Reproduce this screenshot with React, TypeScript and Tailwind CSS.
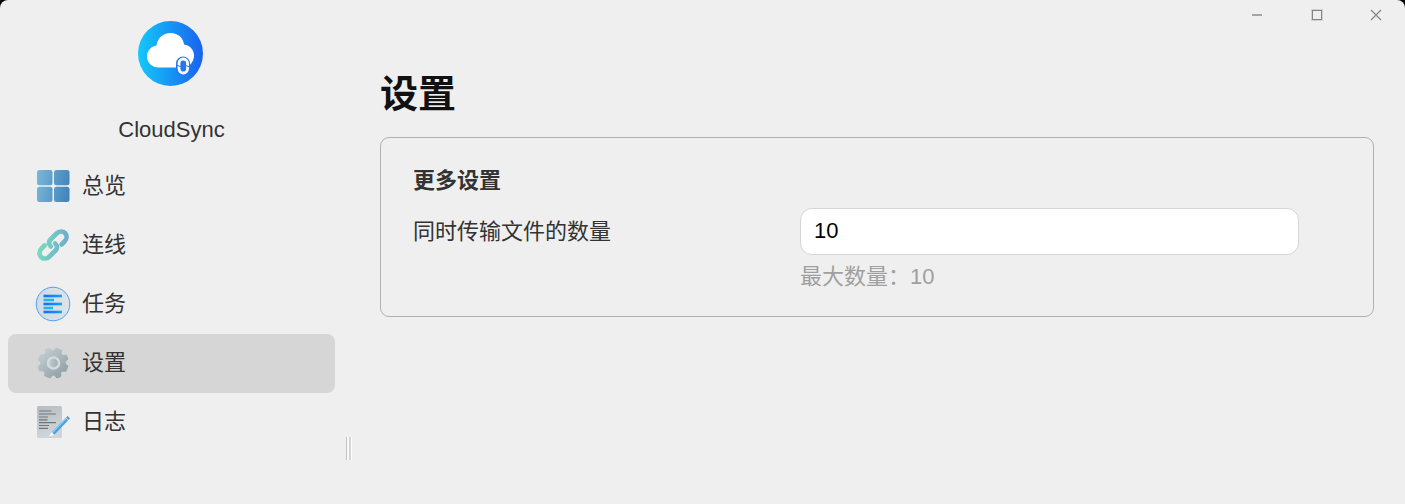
import { useState } from "react";
import type { ReactNode } from "react";

function LogoIcon() {
  return (
    <svg viewBox="0 0 65 65" className="mr-0.5 h-[65px] w-[65px]" aria-hidden="true">
      <defs>
        <linearGradient id="logo" x1="0" x2="1" y1="0.5" y2="0.5">
          <stop offset="0" stopColor="#14c8fb" />
          <stop offset="1" stopColor="#1a62ee" />
        </linearGradient>
      </defs>
      <circle cx="32.5" cy="32.5" r="32.5" fill="url(#logo)" />
      <path
        d="M21 46.500C13.500 46.500 9 41.500 9 35.500C9 29.500 13 25.500 18.500 24.500C19.500 17 25 12 32.500 12C40 12 45.500 17 46 23.500C52 24 56 29 56 34.500C56 41.500 51 46.500 44 46.500Z"
        fill="#fff"
      />
      <rect x="38" y="35.500" width="14" height="19" rx="7" fill="#2477f0" />
      <rect x="41" y="38" width="8.500" height="14" rx="4.200" fill="none" stroke="#fff" strokeWidth="2.800" />
      <path d="M39 44.300l4.500 1.500M47 44.300l4.500 1.500" stroke="#2477f0" strokeWidth="1" />
    </svg>
  );
}

function OverviewIcon() {
  return (
    <svg viewBox="0 0 34 34" className="h-[34px] w-[34px]" aria-hidden="true">
      <defs>
        <linearGradient id="tiles" gradientUnits="userSpaceOnUse" x1="1" y1="14" x2="33" y2="20">
          <stop offset="0" stopColor="#77b4d7" />
          <stop offset="1" stopColor="#4285ba" />
        </linearGradient>
      </defs>
      <g fill="url(#tiles)">
        <rect x="1" y="1" width="15.500" height="15.200" rx="2.500" />
        <rect x="18" y="1" width="15.500" height="15.200" rx="2.500" />
        <rect x="1" y="17.800" width="15.500" height="15.200" rx="2.500" />
        <rect x="18" y="17.800" width="15.500" height="15.200" rx="2.500" />
      </g>
    </svg>
  );
}

function LinkIcon() {
  return (
    <svg viewBox="0 0 34 34" className="h-[34px] w-[34px]" aria-hidden="true">
      <defs>
        <linearGradient id="chain" gradientUnits="userSpaceOnUse" x1="2" y1="14" x2="32" y2="20">
          <stop offset="0" stopColor="#76e0bd" />
          <stop offset="1" stopColor="#70a8cf" />
        </linearGradient>
      </defs>
      <g fill="none" stroke="url(#chain)" strokeWidth="4.600" strokeLinecap="round" strokeLinejoin="round">
        <path d="M14.800 18.500C12.500 16 12.500 13.500 14.500 11.500L20.500 5.500C23 3 26.700 2.700 29 5C31.300 7.300 31 11 28.500 13.500L25.500 16.500" />
        <path d="M19.200 15.500C21.500 18 21.500 20.500 19.500 22.500L13.500 28.500C11 31 7.300 31.300 5 29C2.700 26.700 3 23 5.500 20.500L8.500 17.500" />
      </g>
    </svg>
  );
}

function TaskIcon() {
  return (
    <svg viewBox="0 0 36 36" className="h-9 w-9" aria-hidden="true">
      <defs>
        <linearGradient id="task-bar" gradientUnits="userSpaceOnUse" x1="9" y1="0" x2="27" y2="0">
          <stop offset="0" stopColor="#176df0" />
          <stop offset="1" stopColor="#14a5f5" />
        </linearGradient>
        <linearGradient id="task-disc" x1="0" x2="1">
          <stop offset="0" stopColor="#cfdbe4" />
          <stop offset="1" stopColor="#dfe3e6" />
        </linearGradient>
      </defs>
      <circle cx="18" cy="18" r="16.800" fill="url(#task-disc)" stroke="#4aa3f3" strokeWidth="1" />
      <g fill="url(#task-bar)">
        <rect x="8.500" y="8.700" width="18.500" height="2.600" />
        <rect x="8.500" y="16.700" width="18.500" height="2.600" />
        <rect x="8.500" y="24.700" width="18.500" height="2.600" />
      </g>
      <path d="M8.500 14h10.500M8.500 22h9.500" stroke="#1ab8f2" strokeWidth="2.400" />
    </svg>
  );
}

function GearIcon() {
  return (
    <svg viewBox="0 0 34 34" className="h-[34px] w-[34px]" aria-hidden="true">
      <defs>
        <linearGradient id="gear" gradientUnits="userSpaceOnUse" x1="2" y1="10" x2="32" y2="24">
          <stop offset="0" stopColor="#c3cfd1" />
          <stop offset="1" stopColor="#8fa0a5" />
        </linearGradient>
        <linearGradient id="gear-hub" x1="0" x2="1">
          <stop offset="0" stopColor="#c5d0d3" />
          <stop offset="1" stopColor="#9aabb0" />
        </linearGradient>
      </defs>
      <g transform="rotate(22.5 17 17)">
        <path
          d="M14.500 2.500H19.500L20.600 5.800L23.200 6.900L26.200 5.300L28.700 7.800L27.100 10.800L28.200 13.400L31.500 14.500V19.500L28.200 20.600L27.100 23.200L28.700 26.200L26.200 28.700L23.200 27.100L20.600 28.200L19.500 31.500H14.500L13.400 28.200L10.800 27.100L7.800 28.700L5.300 26.200L6.900 23.200L5.800 20.600L2.500 19.500V14.500L5.800 13.400L6.900 10.800L5.300 7.800L7.800 5.300L10.800 6.900L13.400 5.800Z"
          fill="url(#gear)"
          stroke="url(#gear)"
          strokeWidth="2"
          strokeLinejoin="round"
        />
      </g>
      <circle cx="17.500" cy="17" r="5.600" fill="url(#gear-hub)" stroke="#d5dbdc" strokeWidth="2.400" />
    </svg>
  );
}

function LogIcon() {
  return (
    <svg viewBox="0 0 34 34" className="h-[34px] w-[34px]" aria-hidden="true">
      <defs>
        <linearGradient id="sheet" x1="0" x2="0.3" y1="0" y2="1">
          <stop offset="0" stopColor="#b5bdc2" />
          <stop offset="1" stopColor="#d0d5d9" />
        </linearGradient>
      </defs>
      <rect x="1" y="1" width="25" height="32" rx="1.500" fill="url(#sheet)" />
      <path
        d="M3 6h12.500M3 9h17M3 12h9M3 14.800h8.500M3 17.600h17M3 20.500h10M3 23.300h9"
        stroke="#70777c"
        strokeWidth="1.200"
      />
      <path d="M15.500 27.500L29.500 13L32 15.500L18 30Z" fill="#4b9edb" />
      <path d="M15.500 27.500L29.500 13L30.500 14L16.500 28.500Z" fill="#8bcdf2" />
      <path d="M30 12.500L31.500 11L34 13.500L32.500 15Z" fill="#5599c7" />
      <path d="M15.500 27L18.500 30L13 31.500Z" fill="#f3f8fb" />
    </svg>
  );
}

type NavItem = {
  id: string;
  label: string;
  icon: ReactNode;
};

const NAV_ITEMS: NavItem[] = [
  { id: "overview", label: "总览", icon: <OverviewIcon /> },
  { id: "connections", label: "连线", icon: <LinkIcon /> },
  { id: "tasks", label: "任务", icon: <TaskIcon /> },
  { id: "settings", label: "设置", icon: <GearIcon /> },
  { id: "logs", label: "日志", icon: <LogIcon /> },
];

function Sidebar({ active, onSelect }: { active: string; onSelect: (id: string) => void }) {
  return (
    <aside className="w-[343px] shrink-0 px-2 pt-[21px]">
      <div className="flex flex-col items-center">
        <LogoIcon />
        <p className="mt-7 text-[22px] leading-8">CloudSync</p>
      </div>
      <nav className="mt-[11px]">
        {NAV_ITEMS.map((item) => (
          <button
            key={item.id}
            type="button"
            aria-current={item.id === active ? "page" : undefined}
            onClick={() => onSelect(item.id)}
            className={`flex h-[59px] w-full items-center gap-[11px] rounded-lg pb-0.5 pl-[27px] text-left text-[22px] leading-8 ${
              item.id === active ? "bg-[#d6d6d6]" : ""
            }`}
          >
            <span className="grid w-9 place-items-center">{item.icon}</span>
            {item.label}
          </button>
        ))}
      </nav>
    </aside>
  );
}

function WindowControls() {
  return (
    <header className="flex h-[30px] justify-end text-[#858585]">
      <button type="button" aria-label="最小化" className="grid w-[59px] place-items-center">
        <svg viewBox="0 0 12 12" className="h-3 w-3" aria-hidden="true">
          <path d="M0 6h10" stroke="#a5a5a5" strokeWidth="2" />
        </svg>
      </button>
      <button type="button" aria-label="最大化" className="grid w-[59px] place-items-center">
        <svg viewBox="0 0 12 12" className="h-3 w-3" aria-hidden="true">
          <rect x="0.500" y="0.500" width="11" height="11" fill="none" stroke="#d2d2d2" />
          <rect x="1.500" y="1.500" width="9" height="9" fill="none" stroke="currentColor" />
        </svg>
      </button>
      <button type="button" aria-label="关闭" className="grid w-[59px] place-items-center">
        <svg viewBox="0 0 12 12" className="h-3 w-3" aria-hidden="true">
          <path d="M1 1l10 10M11 1L1 11" stroke="currentColor" strokeWidth="1.200" />
        </svg>
      </button>
    </header>
  );
}

export default function App() {
  const [active, setActive] = useState("settings");
  const [limit, setLimit] = useState("10");

  return (
    <div className="bg-black">
      <div className="flex min-h-screen rounded-t-lg bg-[#efefef] font-['Liberation_Sans','Noto_Sans_CJK_SC',sans-serif] text-[#333]">
        <Sidebar active={active} onSelect={setActive} />

        <div
          role="separator"
          aria-orientation="vertical"
          className="mr-7 mb-11 ml-[3px] flex h-[23px] shrink-0 cursor-col-resize self-end"
        >
          <span className="w-[3px] border-r-2 border-l border-r-[#f8f8f8] border-l-[#c4c4c4]" />
          <span className="w-[3px] border-r border-l-2 border-r-white border-l-[#d4d4d4]" />
        </div>

        <div className="min-w-0 flex-1">
          <WindowControls />
          <main className="pt-9 pr-[31px]">
            <h1 className="text-[38px] leading-[56px] font-bold text-[#111]">设置</h1>
            <section className="mt-[15px] rounded-[9px] border border-[#b0b0b0] px-8 pt-[27px] pb-[23px]">
              <h2 className="text-[22px] leading-8 font-bold">更多设置</h2>
              <div className="mt-[11px] flex">
                <label htmlFor="transfer-limit" className="w-[387px] shrink-0 text-[22px] leading-[47px]">
                  同时传输文件的数量
                </label>
                <div className="mr-[42px] min-w-0 flex-1">
                  <input
                    id="transfer-limit"
                    type="text"
                    inputMode="numeric"
                    value={limit}
                    onChange={(e) => setLimit(e.target.value)}
                    className="block h-[47px] w-full rounded-xl border border-[#d6d6d6] bg-white px-[13px] pb-0.5 text-[22px] text-black"
                  />
                  <p className="mt-1.5 text-[22px] leading-8 text-[#9f9f9f]">最大数量：10</p>
                </div>
              </div>
            </section>
          </main>
        </div>
      </div>
    </div>
  );
}
